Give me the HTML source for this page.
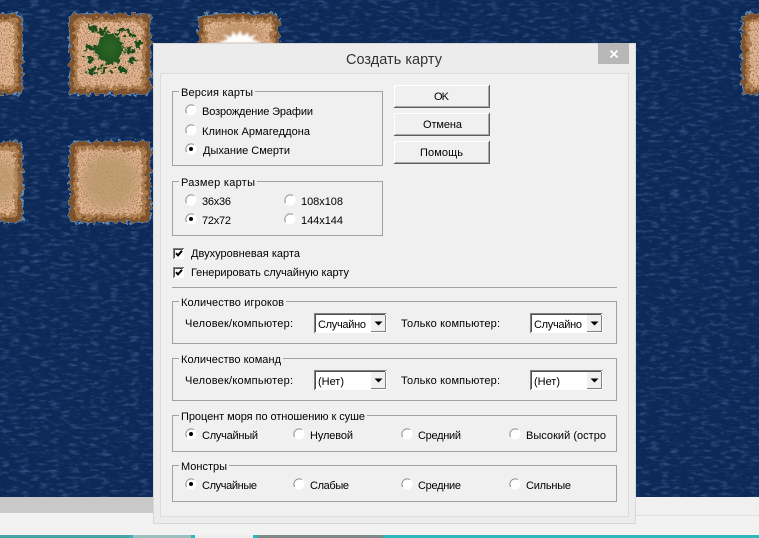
<!DOCTYPE html>
<html lang="ru"><head><meta charset="utf-8"><title>Создать карту</title>
<style>
html,body{margin:0;padding:0;width:759px;height:538px;overflow:hidden;background:#f0f0f0}
svg{display:block}
text{font-family:"Liberation Sans","DejaVu Sans",sans-serif;font-size:11px;fill:#000}
</style></head><body>
<svg width="759" height="538" viewBox="0 0 759 538" xmlns="http://www.w3.org/2000/svg">
<defs>
<filter id="water" x="0" y="0" width="100%" height="100%" color-interpolation-filters="sRGB">
<feTurbulence type="fractalNoise" baseFrequency=".1 .3" numOctaves="3" seed="4" result="n"/>
<feColorMatrix in="n" type="matrix" values="0 0 0 0 .2  0 0 0 0 .33  0 0 0 0 .53  2.4 0 0 0 -1.2" result="c"/>
<feMerge><feMergeNode in="SourceGraphic"/><feMergeNode in="c"/></feMerge>
</filter>
<filter id="jag" x="-15%" y="-15%" width="130%" height="130%" color-interpolation-filters="sRGB">
<feTurbulence type="fractalNoise" baseFrequency=".22" numOctaves="2" seed="7" result="t"/>
<feDisplacementMap in="SourceGraphic" in2="t" scale="9" xChannelSelector="R" yChannelSelector="G" result="d"/>
<feTurbulence type="fractalNoise" baseFrequency=".75" numOctaves="2" seed="3" result="g"/>
<feColorMatrix in="g" type="matrix" values="0 0 0 0 .35  0 0 0 0 .18  0 0 0 0 .08  2 0 0 0 -.95" result="dark"/>
<feComposite in="dark" in2="d" operator="in" result="dk"/>
<feMerge><feMergeNode in="d"/><feMergeNode in="dk"/></feMerge>
</filter>
<filter id="blob" x="-30%" y="-30%" width="160%" height="160%" color-interpolation-filters="sRGB">
<feTurbulence type="fractalNoise" baseFrequency=".2" numOctaves="3" seed="11" result="t"/>
<feDisplacementMap in="SourceGraphic" in2="t" scale="14" xChannelSelector="R" yChannelSelector="G"/>
</filter>
<filter id="soft" x="-30%" y="-30%" width="160%" height="160%"><feGaussianBlur stdDeviation="5"/></filter>
<filter id="soft2" x="-30%" y="-30%" width="160%" height="160%"><feGaussianBlur stdDeviation="1"/></filter>
<g id="isl">
<rect x="1" y="1" width="82" height="82" rx="6" fill="#5f95c8"/>
<rect x="2" y="2" width="80" height="80" rx="6" fill="#855830"/>
<rect x="6" y="6" width="72" height="72" rx="5" fill="#b58656"/>
<rect x="10" y="10" width="64" height="64" rx="4" fill="#e4b894"/>
</g>
<g id="r"><circle cx="0" cy="0" r="5.5" fill="#fff"/><path d="M-4.4 3A5.4 5.4 0 0 1 3-4.4" fill="none" stroke="#8c8c8c" stroke-width="1"/></g>
<g id="rc"><use href="#r"/><circle cx="0" cy="0" r="2" fill="#000"/></g>
<g id="cb"><rect x="0" y="0" width="11" height="11" fill="#fff"/><path d="M.5 11V.5H11" fill="none" stroke="#808080"/><path d="M1.5 10V1.5H10" fill="none" stroke="#505050"/><path d="M3 5.2 5 7.4 9 2.8" fill="none" stroke="#000" stroke-width="2"/></g>
<g id="cmb"><rect x="0" y="0" width="73" height="20" fill="#fff"/><path d="M.5 20V.5H72.5" fill="none" stroke="#808080"/><path d="M1.5 19V1.5H71" fill="none" stroke="#505050"/><rect x="57" y="2" width="15" height="17" fill="#f0f0f0"/><path d="M57 18.5H71.5V2" fill="none" stroke="#808080"/><path d="M60.5 8.5h8l-4 4z" fill="#000"/></g>
</defs>

<rect x="0" y="0" width="759" height="497" fill="#0d2957" filter="url(#water)"/>

<g filter="url(#jag)">
<use href="#isl" x="-60" y="12"/>
<use href="#isl" x="68" y="12"/>
<use href="#isl" x="197" y="12"/>
<use href="#isl" x="740" y="12"/>
<use href="#isl" x="-60" y="140"/>
<use href="#isl" x="68" y="140"/>
</g>
<g filter="url(#blob)">
<ellipse cx="110" cy="49" rx="14" ry="15" fill="#1f5420"/>
<ellipse cx="92" cy="28" rx="5" ry="3" fill="#1a4c1a"/>
<ellipse cx="103" cy="31" rx="6" ry="3" fill="#1a4c1a"/>
<ellipse cx="122" cy="31" rx="7" ry="3" fill="#1a4c1a"/>
<ellipse cx="131" cy="34" rx="4" ry="3" fill="#1a4c1a"/>
<ellipse cx="92" cy="71" rx="5" ry="3" fill="#1a4c1a"/>
<ellipse cx="104" cy="69" rx="5" ry="3" fill="#1a4c1a"/>
<ellipse cx="122" cy="70" rx="5" ry="3" fill="#1a4c1a"/>
<ellipse cx="132" cy="61" rx="4" ry="3" fill="#1a4c1a"/>
<ellipse cx="92" cy="48" rx="5" ry="3" fill="#1a4c1a"/>
<ellipse cx="90" cy="59" rx="4" ry="3" fill="#1a4c1a"/>
<ellipse cx="130" cy="50" rx="5" ry="3" fill="#1a4c1a"/>
<ellipse cx="139" cy="44" rx="2" ry="4" fill="#1a4c1a"/>
</g>
<ellipse cx="110" cy="48" rx="10" ry="10" fill="#3f7d2c" opacity=".4" filter="url(#soft)"/>
<ellipse cx="110" cy="181" rx="28" ry="28" fill="#b8966a" opacity=".75" filter="url(#soft)"/>
<ellipse cx="-30" cy="181" rx="50" ry="28" fill="#b8966a" opacity=".7" filter="url(#soft)"/>
<path d="M215 43 A24 20 0 0 1 263 43z" fill="#b98c60" opacity=".8" filter="url(#soft)"/>
<path d="M216 43 228 39 222 34 231 37 233 31 237 36 240 30 243 36 248 32 249 37 257 34 252 39 263 43z" fill="#fff" filter="url(#soft2)"/>

<rect x="0" y="497" width="153" height="16" fill="#c9c9c9"/>
<rect x="0" y="513" width="759" height="22" fill="#f2f2f2"/>
<rect x="636" y="497" width="123" height="18" fill="#f0f0f0"/>
<rect x="636" y="515" width="123" height="1" fill="#dedede"/>
<rect x="0" y="535" width="759" height="3" fill="#2cb7bf"/>
<rect x="0" y="535" width="130" height="3" fill="#4aa4a6"/>
<rect x="133" y="535" width="58" height="3" fill="#9cc0c0"/>
<rect x="195" y="535" width="58" height="3" fill="#eeeeee"/>
<rect x="258" y="535" width="125" height="3" fill="#7f8a88"/>

<!-- dialog -->
<rect x="153" y="43" width="483" height="481" fill="#ececec"/>
<rect x="153.5" y="43.5" width="482" height="480" fill="none" stroke="#d8d8d8"/>
<rect x="160" y="73" width="469" height="444" fill="#f0f0f0"/>
<rect x="160.5" y="73.5" width="468" height="443" fill="none" stroke="#dcdcdc"/>
<rect x="598" y="43" width="31" height="21" fill="#b7b7b7"/>
<path d="M610.5 50.5 617.5 57.5M617.5 50.5 610.5 57.5" stroke="#fff" stroke-width="1.8" fill="none"/>
<text x="346" y="64" textLength="96" style="font-size:14.5px;fill:#333">Создать карту</text>

<g fill="none" stroke="#a0a0a0">
<rect x="172.5" y="91.5" width="210" height="74"/>
<rect x="172.5" y="181.5" width="210" height="54"/>
<path d="M172 287.5H617"/>
<rect x="172.5" y="301.5" width="444" height="42"/>
<rect x="172.5" y="358.5" width="444" height="42"/>
<rect x="172.5" y="415.5" width="444" height="36"/>
<rect x="172.5" y="465.5" width="444" height="36"/>
</g>
<g fill="#f0f0f0">
<rect x="179" y="88" width="76" height="8"/>
<rect x="179" y="178" width="78" height="8"/>
<rect x="179" y="298" width="107" height="8"/>
<rect x="179" y="355" width="104" height="8"/>
<rect x="179" y="412" width="188" height="8"/>
<rect x="179" y="462" width="50" height="8"/>
</g>

<text x="181" y="96" textLength="72">Версия карты</text>
<use href="#r" x="191" y="110"/><text x="202" y="115" textLength="111">Возрождение Эрафии</text>
<use href="#r" x="191" y="130"/><text x="202" y="135" textLength="108">Клинок Армагеддона</text>
<use href="#rc" x="191" y="149"/><text x="203" y="154" textLength="87">Дыхание Смерти</text>

<text x="181" y="186" textLength="74">Размер карты</text>
<use href="#r" x="191" y="200"/><text x="202" y="205" textLength="29">36x36</text>
<use href="#rc" x="191" y="219"/><text x="202" y="224" textLength="29">72x72</text>
<use href="#r" x="290" y="200"/><text x="301" y="205" textLength="42">108x108</text>
<use href="#r" x="290" y="219"/><text x="301" y="224" textLength="42">144x144</text>

<g>
<rect x="394" y="85" width="96" height="23" fill="#f0f0f0"/><path d="M394.5 107V85.5H489" fill="none" stroke="#fff"/><path d="M394 107.5H489.5V85" fill="none" stroke="#606060"/><path d="M395 106.5H488.5V86" fill="none" stroke="#a8a8a8"/>
<rect x="394" y="113" width="96" height="23" fill="#f0f0f0"/><path d="M394.5 135V113.5H489" fill="none" stroke="#fff"/><path d="M394 135.5H489.5V113" fill="none" stroke="#606060"/><path d="M395 134.5H488.5V114" fill="none" stroke="#a8a8a8"/>
<rect x="394" y="141" width="96" height="23" fill="#f0f0f0"/><path d="M394.5 163V141.5H489" fill="none" stroke="#fff"/><path d="M394 163.5H489.5V141" fill="none" stroke="#606060"/><path d="M395 162.5H488.5V142" fill="none" stroke="#a8a8a8"/>
</g>
<text x="434" y="100" textLength="15">OK</text>
<text x="423" y="128" textLength="39">Отмена</text>
<text x="420" y="156" textLength="43">Помощь</text>

<use href="#cb" x="173" y="248"/><text x="191" y="257" textLength="109">Двухуровневая карта</text>
<use href="#cb" x="173" y="267"/><text x="191" y="276" textLength="158">Генерировать случайную карту</text>

<text x="181" y="306" textLength="103">Количество игроков</text>
<text x="185" y="327" textLength="108">Человек/компьютер:</text>
<use href="#cmb" x="314" y="313"/><text x="318" y="328" textLength="48">Случайно</text>
<text x="401" y="327" textLength="99">Только компьютер:</text>
<use href="#cmb" x="530" y="313"/><text x="534" y="328" textLength="48">Случайно</text>

<text x="181" y="363" textLength="100">Количество команд</text>
<text x="185" y="384" textLength="108">Человек/компьютер:</text>
<use href="#cmb" x="314" y="370"/><text x="318" y="385" textLength="26">(Нет)</text>
<text x="401" y="384" textLength="99">Только компьютер:</text>
<use href="#cmb" x="530" y="370"/><text x="534" y="385" textLength="26">(Нет)</text>

<text x="181" y="420" textLength="184">Процент моря по отношению к суше</text>
<use href="#rc" x="191" y="434"/><text x="202" y="439" textLength="56">Случайный</text>
<use href="#r" x="299" y="434"/><text x="310" y="439" textLength="43">Нулевой</text>
<use href="#r" x="407" y="434"/><text x="418" y="439" textLength="43">Средний</text>
<use href="#r" x="515" y="434"/><text x="526" y="439" textLength="80">Высокий (остро</text>

<text x="181" y="470" textLength="46">Монстры</text>
<use href="#rc" x="191" y="484"/><text x="202" y="489" textLength="55">Случайные</text>
<use href="#r" x="299" y="484"/><text x="310" y="489" textLength="39">Слабые</text>
<use href="#r" x="407" y="484"/><text x="418" y="489" textLength="43">Средние</text>
<use href="#r" x="515" y="484"/><text x="526" y="489" textLength="45">Сильные</text>
</svg>
</body></html>
